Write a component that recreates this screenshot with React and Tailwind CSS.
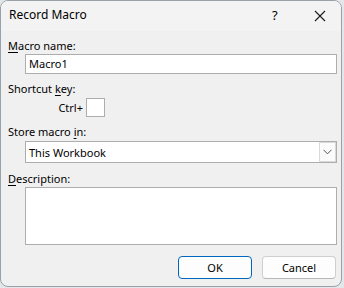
import React from "react";

export default function App() {
  const font = { fontFamily: '"Noto Sans", "Open Sans", sans-serif' };
  return (
    <div className="w-[344px] h-[288px] bg-[#e3e7e9] overflow-hidden" style={font}>
      <div className="w-[342px] h-[287px] border border-[#99a2aa] rounded-[8px] bg-[#f0f0f0] overflow-hidden flex flex-col text-[11px] leading-[15px] text-[#000]">
        {/* title bar */}
        <div className="h-[30px] shrink-0 bg-[#f3f3f3] flex items-start pt-[6px] pl-[8px] relative">
          <span className="text-[12px] leading-[16px]">Record Macro</span>
          <span className="absolute left-[271px] top-[6px] text-[13px] leading-[16px]">?</span>
          <svg className="absolute left-[313px] top-[9px]" width="12" height="12" viewBox="0 0 12 12">
            <path d="M1 1L11 11M11 1L1 11" stroke="#1a1a1a" strokeWidth="1.1" />
          </svg>
        </div>
        {/* body */}
        <div className="flex flex-col pl-[7px] pr-[4px]">
          <div className="mt-[7px]">
            <span className="underline underline-offset-[2px]">M</span>acro name:
          </div>
          <div className="mt-[1px] ml-[17px] w-[312px] h-[20px] border border-[#adadad] bg-white flex items-start pt-[1px] pl-[3px]">
            Macro1
          </div>
          <div className="mt-[7px]">
            Shortcut <span className="underline underline-offset-[2px]">k</span>ey:
          </div>
          <div className="mt-[2px] flex items-center h-[19px]">
            <div className="w-[75px] text-right">Ctrl+</div>
            <div className="ml-[3px] w-[19px] h-[19px] border border-[#adadad] bg-white" />
          </div>
          <div className="mt-[7px]">
            Store macro <span className="underline underline-offset-[2px]">i</span>n:
          </div>
          <div className="mt-[2px] ml-[17px] w-[312px] h-[22px] border border-[#adadad] bg-white flex items-center">
            <div className="flex-1 pl-[3px]">This Workbook</div>
            <div className="w-[17px] h-[20px] border border-[#d9d9d9] bg-[#fbfbfb] flex items-center justify-center">
              <svg width="9" height="6" viewBox="0 0 9 6">
                <path d="M0.5 0.8L4.5 4.8L8.5 0.8" stroke="#555" strokeWidth="1" fill="none" />
              </svg>
            </div>
          </div>
          <div className="mt-[8px]">
            <span className="underline underline-offset-[2px]">D</span>escription:
          </div>
          <div className="mt-[1px] ml-[17px] w-[312px] h-[58px] border border-[#adadad] bg-white" />
          <div className="mt-[11px] flex gap-[10px] ml-[170px]">
            <div className="w-[74px] h-[23px] rounded-[4px] border border-[#0067c0] bg-[#fdfdfd] flex items-center justify-center">
              OK
            </div>
            <div className="w-[74px] h-[23px] rounded-[4px] border border-[#d0d0d0] border-b-[#b8b8b8] bg-[#fdfdfd] flex items-center justify-center">
              Cancel
            </div>
          </div>
        </div>
      </div>
    </div>
  );
}
